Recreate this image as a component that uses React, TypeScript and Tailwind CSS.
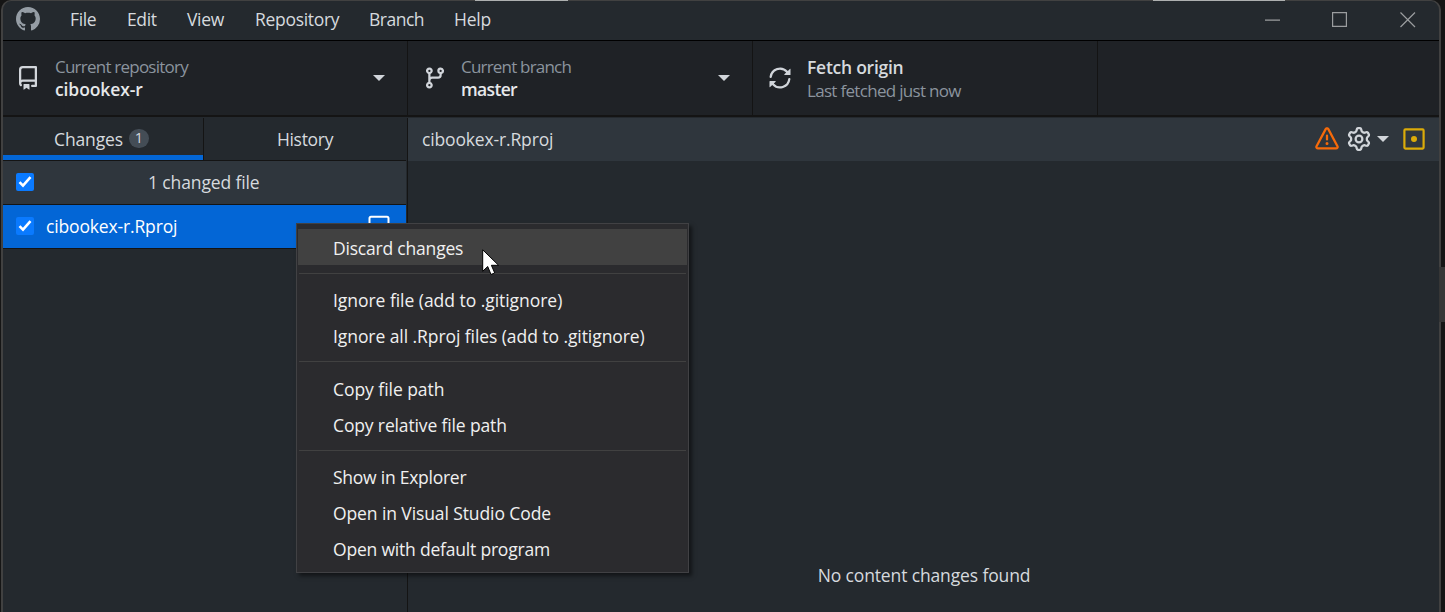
import React from "react";

const Glyph = ({ d, className }: { d: string; className: string }) => (
  <svg viewBox="0 0 16 16" fill="currentColor" className={className}>
    <path d={d} />
  </svg>
);

const mark =
  "M8 0C3.58 0 0 3.58 0 8c0 3.54 2.29 6.53 5.47 7.59.4.07.55-.17.55-.38 0-.19-.01-.82-.01-1.49-2.01.37-2.53-.49-2.69-.94-.09-.23-.48-.94-.82-1.13-.28-.15-.68-.52-.01-.53.63-.01 1.08.58 1.23.82.72 1.21 1.87.87 2.33.66.07-.52.28-.87.51-1.07-1.78-.2-3.64-.89-3.64-3.95 0-.87.31-1.59.82-2.15-.08-.2-.36-1.02.08-2.12 0 0 .67-.21 2.2.82.64-.18 1.32-.27 2-.27.68 0 1.36.09 2 .27 1.53-1.04 2.2-.82 2.2-.82.44 1.1.16 1.92.08 2.12.51.56.82 1.27.82 2.15 0 3.07-1.87 3.75-3.65 3.95.29.25.54.73.54 1.48 0 1.07-.01 1.93-.01 2.2 0 .21.15.46.55.38A8.013 8.013 0 0016 8c0-4.42-3.58-8-8-8z";
const repo =
  "M2 2.5A2.5 2.5 0 0 1 4.5 0h8.75a.75.75 0 0 1 .75.75v12.5a.75.75 0 0 1-.75.75h-2.5a.75.75 0 0 1 0-1.5h1.75v-2h-8a1 1 0 0 0-.714 1.7.75.75 0 1 1-1.072 1.05A2.495 2.495 0 0 1 2 11.5Zm10.5-1h-8a1 1 0 0 0-1 1v6.708A2.486 2.486 0 0 1 4.5 9h8ZM5 12.25a.25.25 0 0 1 .25-.25h3.5a.25.25 0 0 1 .25.25v3.25a.25.25 0 0 1-.4.2l-1.45-1.087a.249.249 0 0 0-.3 0L5.4 15.7a.25.25 0 0 1-.4-.2Z";
const branch =
  "M9.5 3.25a2.25 2.25 0 1 1 3 2.122V6A2.5 2.5 0 0 1 10 8.5H6a1 1 0 0 0-1 1v1.128a2.251 2.251 0 1 1-1.5 0V5.372a2.25 2.25 0 1 1 1.5 0v1.836A2.493 2.493 0 0 1 6 7h4a1 1 0 0 0 1-1v-.628A2.25 2.25 0 0 1 9.5 3.25Zm-6 0a.75.75 0 1 0 1.5 0 .75.75 0 0 0-1.5 0Zm8.25-.75a.75.75 0 1 0 0 1.5.75.75 0 0 0 0-1.5ZM4.25 12a.75.75 0 1 0 0 1.5.75.75 0 0 0 0-1.5Z";
const sync =
  "M8 2.5a5.487 5.487 0 0 0-4.131 1.869l1.204 1.204A.25.25 0 0 1 4.896 6H1.25A.25.25 0 0 1 1 5.75V2.104a.25.25 0 0 1 .427-.177l1.38 1.38A7.001 7.001 0 0 1 14.95 7.16a.75.75 0 0 1-1.49.178A5.501 5.501 0 0 0 8 2.5ZM1.705 8.005a.75.75 0 0 1 .834.656 5.501 5.501 0 0 0 9.592 2.97l-1.204-1.204a.25.25 0 0 1 .177-.427h3.646a.25.25 0 0 1 .25.25v3.646a.25.25 0 0 1-.427.177l-1.38-1.38A7.001 7.001 0 0 1 1.05 8.84a.75.75 0 0 1 .656-.834Z";
const alert =
  "M6.457 1.047c.659-1.234 2.427-1.234 3.086 0l6.082 11.378A1.75 1.75 0 0 1 14.082 15H1.918a1.75 1.75 0 0 1-1.543-2.575Zm1.763.707a.25.25 0 0 0-.44 0L1.698 13.132a.25.25 0 0 0 .22.368h12.164a.25.25 0 0 0 .22-.368Zm.53 3.996v2.5a.75.75 0 0 1-1.5 0v-2.5a.75.75 0 0 1 1.5 0ZM9 11a1 1 0 1 1-2 0 1 1 0 0 1 2 0Z";
const gear =
  "M8 0a8.2 8.2 0 0 1 .701.031C9.444.095 9.99.645 10.16 1.29l.288 1.107c.018.066.079.158.212.224.231.114.454.243.668.386.123.082.233.09.299.071l1.103-.303c.644-.176 1.392.021 1.82.63.27.385.506.792.704 1.218.315.675.111 1.422-.364 1.891l-.814.806c-.049.048-.098.147-.088.294.016.257.016.515 0 .772-.01.147.038.246.088.294l.814.806c.475.469.679 1.216.364 1.891a7.977 7.977 0 0 1-.704 1.217c-.428.61-1.176.807-1.82.63l-1.102-.302c-.067-.019-.177-.011-.3.071a5.909 5.909 0 0 1-.668.386c-.133.066-.194.158-.211.224l-.29 1.106c-.168.646-.715 1.196-1.458 1.26a8.006 8.006 0 0 1-1.402 0c-.743-.064-1.289-.614-1.458-1.26l-.289-1.106c-.018-.066-.079-.158-.212-.224a5.738 5.738 0 0 1-.668-.386c-.123-.082-.233-.09-.299-.071l-1.103.303c-.644.176-1.392-.021-1.82-.63a8.12 8.12 0 0 1-.704-1.218c-.315-.675-.111-1.422.363-1.891l.815-.806c.05-.048.098-.147.088-.294a6.214 6.214 0 0 1 0-.772c.01-.147-.038-.246-.088-.294l-.815-.806C.635 6.045.431 5.298.746 4.623a7.92 7.92 0 0 1 .704-1.217c.428-.61 1.176-.807 1.82-.63l1.102.302c.067.019.177.011.3-.071.214-.143.437-.272.668-.386.133-.066.194-.158.211-.224l.29-1.106C6.009.645 6.556.095 7.299.03 7.53.01 7.764 0 8 0Zm-.571 1.525c-.036.003-.108.036-.137.146l-.289 1.105c-.147.561-.549.967-.998 1.189-.173.086-.34.183-.5.29-.417.278-.97.423-1.529.27l-1.103-.303c-.109-.03-.175.016-.195.045-.22.312-.412.644-.573.99-.014.031-.021.11.059.19l.815.806c.411.406.562.957.53 1.456a4.709 4.709 0 0 0 0 .582c.032.499-.119 1.05-.53 1.456l-.815.806c-.081.08-.073.159-.059.19.162.346.353.677.573.989.02.03.085.076.195.046l1.102-.303c.56-.153 1.113-.008 1.53.27.161.107.328.204.501.29.447.222.85.629.997 1.189l.289 1.105c.029.109.101.143.137.146a6.6 6.6 0 0 0 1.142 0c.036-.003.108-.036.137-.146l.289-1.105c.147-.561.549-.967.998-1.189.173-.086.34-.183.5-.29.417-.278.97-.423 1.529-.27l1.103.303c.109.029.175-.016.195-.045.22-.313.411-.644.573-.99.014-.031.021-.11-.059-.19l-.815-.806c-.411-.406-.562-.957-.53-1.456a4.709 4.709 0 0 0 0-.582c-.032-.499.119-1.05.53-1.456l.815-.806c.081-.08.073-.159.059-.19a6.464 6.464 0 0 0-.573-.989c-.02-.03-.085-.076-.195-.046l-1.102.303c-.56.153-1.113.008-1.53-.27a4.44 4.44 0 0 0-.501-.29c-.447-.222-.85-.629-.997-1.189l-.289-1.105c-.029-.11-.101-.143-.137-.146a6.6 6.6 0 0 0-1.142 0ZM11 8a3 3 0 1 1-6 0 3 3 0 0 1 6 0ZM9.5 8a1.5 1.5 0 1 0-3.001.001A1.5 1.5 0 0 0 9.5 8Z";

const Check = () => (
  <svg viewBox="0 0 18 18" className="size-[18px] shrink-0">
    <rect width="18" height="18" rx="2" fill="#0a7aff" />
    <path d="M3.5 9.2 7 12.7 14.5 4.2" fill="none" stroke="#fff" strokeWidth="2.6" />
  </svg>
);

const Caret = () => (
  <svg viewBox="0 0 12 6" className="h-1.5 w-3 shrink-0">
    <path d="M0 0h12L6 6z" fill="#d1d5da" />
  </svg>
);

const Item = ({ children, active, className }: { children: string; active?: boolean; className: string }) => (
  <div className={"flex h-9 items-center pl-[35px] pt-[2px] " + (active ? "bg-[#414141]" : "")}>
    <span className={className}>{children}</span>
  </div>
);

const Sep = ({ className }: { className: string }) => (
  <div className={"mx-px mt-2 h-px shrink-0 bg-[#414141] " + className} />
);

export default function App() {
  return (
    <div className="relative flex h-[612px] w-[1445px] overflow-hidden whitespace-nowrap bg-[#151515] pl-px font-['Open_Sans','Noto_Sans',sans-serif] text-[17.5px] leading-6 text-[#d6dade]">
      <div className="flex w-[1440px] flex-col overflow-hidden rounded-t-[10px] border-x-2 border-t border-[#414141] bg-[#24292e]">
        <header className="flex h-10 shrink-0 items-center border-b border-black pb-[3px] pl-[13px]">
          <Glyph d={mark} className="size-6 text-[#959da5]" />
          <nav className="flex items-center">
            <span className="ml-[30px] w-[57px] tracking-[-0.35px]">File</span>
            <span className="w-[60px] tracking-[-0.35px]">Edit</span>
            <span className="w-[68px] tracking-[-0.35px]">View</span>
            <span className="w-[114px] tracking-[-0.3px]">Repository</span>
            <span className="w-[85px] tracking-[-0.5px]">Branch</span>
            <span className="tracking-[-0.2px]">Help</span>
          </nav>
          <svg viewBox="0 0 151 17" className="mr-[23px] ml-auto h-[17px] w-[151px]" fill="none" stroke="#9b9d9f" strokeWidth="1.2">
            <path d="M0 9.2h15M67.6 1.6h13.8v13.8H67.6zM135.5 1.5l14.5 14.5M150 1.5l-14.5 14.5" />
          </svg>
        </header>
        <div className="flex h-[76px] shrink-0 border-b-2 border-[#141414] bg-[#1f2226]">
          <div className="flex w-[405px] items-center border-r border-[#141414] pr-[22px] pl-[13px]">
            <Glyph d={repo} className="size-6 text-[#d1d5da]" />
            <div className="ml-[15px] flex-1 leading-[23px]">
              <div className="text-[17px] text-[#8b949e] tracking-[-0.77px]">Current repository</div>
              <div className="font-semibold text-[#e6e8ea] tracking-[-0.1px]">cibookex-r</div>
            </div>
            <Caret />
          </div>
          <div className="flex w-[345px] items-center border-r border-[#141414] pr-[22px] pl-[15px]">
            <Glyph d={branch} className="size-6 text-[#d1d5da]" />
            <div className="ml-[14px] flex-1 leading-[23px]">
              <div className="text-[17px] text-[#8b949e] tracking-[-0.8px]">Current branch</div>
              <div className="font-semibold text-[#e6e8ea] tracking-[-0.65px]">master</div>
            </div>
            <Caret />
          </div>
          <div className="flex w-[345px] items-center border-r border-[#141414] pl-[15px]">
            <Glyph d={sync} className="size-6 -scale-x-100 text-[#d1d5da]" />
            <div className="ml-[15px] flex-1 pt-[2px] leading-[23px]">
              <div className="font-semibold text-[#d6dade] tracking-[-0.25px]">Fetch origin</div>
              <div className="text-[17px] text-[#8b949e] tracking-[-0.69px]">Last fetched just now</div>
            </div>
          </div>
        </div>
        <div className="flex min-h-0 flex-1 pt-px">
          <aside className="flex w-[405px] shrink-0 flex-col border-r border-[#141414] pr-px">
            <div className="flex h-[43px] shrink-0 border-b border-[#141414]">
              <div className="flex w-[201px] items-center justify-center gap-[6px] border-r border-[#141414] pr-[3px] shadow-[inset_0_-5px_0_#0366d6]">
                <span className="tracking-[-0.15px]">Changes</span>
                <span className="mb-[2px] flex h-[19px] w-5 items-center justify-center rounded-full bg-[#444d56] text-[14.5px]">1</span>
              </div>
              <div className="flex flex-1 items-center justify-center">
                <span className="tracking-[-0.3px]">History</span>
              </div>
            </div>
            <div className="flex h-[44px] shrink-0 items-center border-b border-[#141414] bg-[#2f363d] pb-px pl-[13px]">
              <Check />
              <span className="ml-[114px] tracking-[-0.12px]">1 changed file</span>
            </div>
            <div className="flex h-[44px] shrink-0 items-center border-b border-[#141414] bg-[#0366d6] pr-[15px] pb-px pl-[13px] text-white">
              <Check />
              <span className="ml-3 flex-1 tracking-[-0.15px]">cibookex-r.Rproj</span>
              <svg viewBox="0 0 24 24" className="size-6" fill="none" stroke="#fff" strokeWidth="2">
                <rect x="2.5" y="2.7" width="19" height="19" rx="1.5" />
              </svg>
            </div>
          </aside>
          <main className="flex flex-1 flex-col">
            <div className="flex h-[43px] shrink-0 items-center bg-[#2f363d] pr-[13px] pb-px pl-[14px]">
              <span className="flex-1 pb-px tracking-[-0.15px]">cibookex-r.Rproj</span>
              <Glyph d={alert} className="size-6 text-[#f66a0a]" />
              <Glyph d={gear} className="ml-2 size-6 text-[#d1d5da]" />
              <span className="ml-[6px] flex"><Caret /></span>
              <svg viewBox="0 0 24 24" className="ml-[13px] size-6" fill="none" stroke="#dbab09" strokeWidth="2.2">
                <rect x="2.4" y="2.4" width="19.2" height="19.2" rx="1" />
                <circle cx="12" cy="12" r="3" fill="#dbab09" stroke="none" />
              </svg>
            </div>
            <div className="flex flex-1 items-end justify-center pb-[25px]">
              <span className="mr-[-1px] tracking-[-0.13px]">No content changes found</span>
            </div>
          </main>
        </div>
      </div>
      <div className="absolute top-[267px] left-[1439px] h-[55px] w-1.5 bg-[#363636]" />
      <div className="absolute top-0 left-[475px] h-px w-[93px] bg-[#aeb0b0]" />
      <div className="absolute top-0 left-[1153px] h-px w-[132px] bg-[#aeb0b0]" />
      <div className="absolute top-[223px] left-[296px] flex h-[350px] w-[393px] flex-col border border-[#414144] bg-[#2b2b2e] px-px pt-[5px] text-[#f0f0f0] shadow-[3px_3px_4px_rgba(0,0,0,0.5)]">
        <Item active className="tracking-[-0.2px]">Discard changes</Item>
        <Sep className="mb-[7px]" />
        <Item className="tracking-[-0.04px]">Ignore file (add to .gitignore)</Item>
        <Item className="tracking-[-0.07px]">Ignore all .Rproj files (add to .gitignore)</Item>
        <Sep className="mb-2" />
        <Item className="tracking-[-0.05px]">Copy file path</Item>
        <Item className="tracking-[-0.14px]">Copy relative file path</Item>
        <Sep className="mb-[7px]" />
        <Item className="tracking-[-0.25px]">Show in Explorer</Item>
        <Item className="tracking-[-0.1px]">Open in Visual Studio Code</Item>
        <Item className="tracking-[-0.2px]">Open with default program</Item>
      </div>
      <svg viewBox="0 0 18 27" className="absolute top-[249px] left-[482px] h-[27px] w-[18px]">
        <path d="M.7.8V22.3l5-4.8 3.3 8 3.7-1.6-3.3-7.6h7.2z" fill="#fff" stroke="#000" strokeWidth="1" />
      </svg>
    </div>
  );
}
